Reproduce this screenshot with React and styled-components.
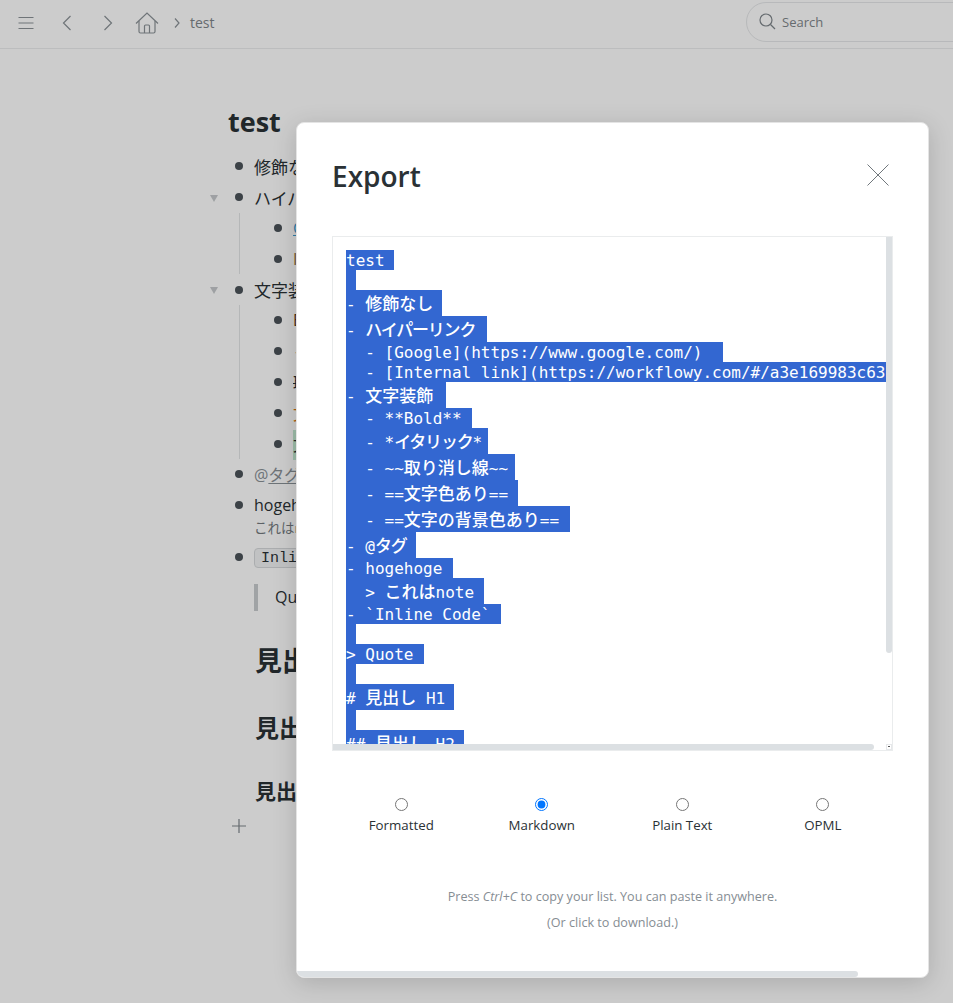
import React from "react";
import styled, { createGlobalStyle } from "styled-components";

const sans = `"Open Sans", "Noto Sans CJK JP", sans-serif`;
const mono = `"DejaVu Sans Mono", "Noto Sans CJK JP", monospace`;

const GlobalStyle = createGlobalStyle`
  html, body { margin: 0; height: 100%; overflow: hidden; background: #fff; }
  body { font-family: ${sans}; color: #2a3135; }
`;

const Page = styled.div`
  position: relative;
  height: 1003px;
  overflow: hidden;
`;

const TopBar = styled.header`
  display: flex;
  align-items: center;
  box-sizing: content-box;
  height: 45px;
  padding: 0 0 3px 18px;
  border-bottom: 1px solid #ecedee;
  color: #8b9297;
`;

const NavIcon = styled.svg`
  display: block;
  flex: none;
  margin-left: ${(p) => p.$left || 0}px;
  fill: none;
  stroke: currentColor;
  stroke-width: 1.2;
`;

const Crumb = styled.span`
  margin: -1px 0 0 10px;
  font-size: 14px;
  color: #7f868b;
`;

const SearchBox = styled.div`
  display: flex;
  align-items: center;
  gap: 6px;
  width: 300px;
  height: 38px;
  margin-left: auto;
  margin-right: -107px;
  margin-top: -2px;
  padding-left: 12px;
  box-sizing: content-box;
  border: 1px solid #e6e8ea;
  border-radius: 20px;
  font-size: 13px;
  color: #7f868b;
`;

const Content = styled.main`
  width: 95px;
  overflow: hidden;
  padding: 54px 0 0 205px;
`;

const Title = styled.h1`
  margin: 0 0 10px 23px;
  font-size: 27px;
  line-height: 38px;
  font-weight: 700;
  color: #2a3135;
`;

const Row = styled.div`
  display: flex;
  align-items: center;
  height: 30.8px;
  font-size: 16px;
  white-space: nowrap;
`;

const Jp = styled.span`
  font-size: 17px;
`;

const Toggle = styled.span`
  flex: none;
  box-sizing: border-box;
  width: 16px;
  padding-left: 2px;
  display: flex;
  justify-content: center;
  &::before {
    content: "";
    display: ${(p) => (p.$open ? "block" : "none")};
    border-left: 4px solid transparent;
    border-right: 4px solid transparent;
    border-top: 7px solid #c6c9cc;
    margin-top: 2px;
  }
`;

const Dot = styled.span`
  flex: none;
  width: 8px;
  height: 8px;
  margin: 0 11px 0 14px;
  border-radius: 50%;
  background: #4b5359;
`;

const Children = styled.div`
  margin-left: 34px;
  padding-left: 4px;
  border-left: 1px solid #e3e5e7;
`;

const Tag = styled.span`
  color: #8a9197;
  & u { text-underline-offset: 2px; }
`;

const Link = styled.span`
  color: #3d9bd0;
  text-decoration: underline;
`;

const Tinted = styled.span`
  color: ${(p) => p.$color || "inherit"};
  background: ${(p) => p.$bg || "none"};
  padding: ${(p) => (p.$bg ? "4px 0" : "0")};
`;

const Note = styled.div`
  margin-left: 49px;
  height: 21px;
  font-size: 13.5px;
  line-height: 15px;
  color: #737a80;
  white-space: nowrap;
`;

const InlineCode = styled.code`
  display: inline-block;
  padding: 0 6px;
  height: 20px;
  line-height: 19px;
  box-sizing: border-box;
  border: 1px solid #d6d9db;
  border-radius: 4px;
  background: #f2f3f4;
  font-family: "Liberation Mono", monospace;
  font-size: 15px;
`;

const Quote = styled.blockquote`
  margin: 12px 0 0 49px;
  height: 27px;
  padding-left: 17px;
  border-left: 4px solid #c9cccf;
  font-size: 16px;
  line-height: 27px;
`;

const Heading = styled.div`
  margin: ${(p) => p.$top}px 0 0 50px;
  font-size: ${(p) => p.$size}px;
  line-height: ${(p) => p.$line}px;
  font-weight: 700;
  white-space: nowrap;
`;

const AddButton = styled.div`
  display: flex;
  color: #7f868b;
  margin: 12px 0 0 27px;
`;

const Overlay = styled.div`
  position: absolute;
  inset: 0;
  background: rgba(0, 0, 0, 0.2);
`;

const Modal = styled.section`
  position: absolute;
  left: 296px;
  top: 122px;
  width: 633px;
  height: 856px;
  box-sizing: border-box;
  display: flex;
  flex-direction: column;
  padding: 0 35px;
  overflow: hidden;
  background: #fff;
  border: 1px solid #e4e4e4;
  border-radius: 8px;
  box-shadow: 0 5px 24px rgba(0, 0, 0, 0.16);
`;

const ModalHead = styled.div`
  display: flex;
  align-items: center;
  justify-content: space-between;
  height: 113px;
`;

const ModalTitle = styled.h2`
  margin: 0 0 7px;
  font-size: 28px;
  font-weight: 600;
  line-height: 40px;
  color: #2a3135;
`;

const CloseIcon = styled.svg`
  display: block;
  margin: 0 4px 9px 0;
  stroke: #70777c;
  stroke-width: 1;
  fill: none;
`;

const ExportBox = styled.div`
  position: relative;
  flex: none;
  width: 561px;
  height: 515px;
  box-sizing: border-box;
  padding: 13px 0 0 13px;
  overflow: hidden;
  border: 1px solid #eaeced;
`;

const SelectedLine = styled.div`
  width: ${(p) => p.$w}px;
  max-width: 540px;
  height: ${(p) => (p.$tall ? 26 : 20)}px;
  line-height: ${(p) => (p.$tall ? 28 : 22)}px;
  overflow: hidden;
  background: #3367d1;
  color: #fff;
  font-family: ${mono};
  font-size: 16px;
  white-space: pre;
`;

const Wide = styled.span`
  font-size: 17px;
  font-weight: 500;
  letter-spacing: ${(p) => (p.$kana ? "-1.2px" : "0")};
`;

const VScroll = styled.div`
  position: absolute;
  right: 0;
  top: 0;
  width: 6px;
  height: 416px;
  border-radius: 0 0 3px 3px;
  background: #dce0e3;
`;

const HScroll = styled.div`
  position: absolute;
  left: 0;
  bottom: 0;
  width: 541px;
  height: 6px;
  border-radius: 0 3px 3px 0;
  background: #dce0e3;
`;

const Resizer = styled.div`
  position: absolute;
  right: 0;
  bottom: 0;
  width: 6px;
  height: 6px;
  box-sizing: border-box;
  border: 1px solid #e6e8ea;
  background: #fff;
  &::after {
    content: "";
    display: block;
    width: 2px;
    height: 1px;
    margin: 1px 0 0 1px;
    background: #555;
  }
`;

const Formats = styled.div`
  display: grid;
  grid-template-columns: repeat(4, 1fr);
  width: 562px;
  margin-top: 47px;
  margin-left: -1px;
`;

const Format = styled.label`
  display: flex;
  flex-direction: column;
  align-items: center;
  gap: 5px;
  font-size: 13.3px;
  line-height: 18px;
  color: #2a3135;
`;

const Radio = styled.input`
  width: 13px;
  height: 13px;
  margin: 0;
`;

const Hint = styled.p`
  margin: ${(p) => p.$top}px 0 0;
  font-size: 12.6px;
  line-height: 18px;
  text-align: center;
  color: #868d93;
`;

const PageScroll = styled.div`
  position: absolute;
  left: 0;
  bottom: 0;
  width: 561px;
  height: 6px;
  border-radius: 0 3px 3px 0;
  background: #dce0e3;
`;

const exportLines = [
  { w: 48, text: "test " },
  { w: 10, text: " " },
  { w: 96, tall: true, text: "- 修飾なし" },
  { w: 141, tall: true, text: "- ハイパーリンク" },
  { w: 377, text: "  - [Google](https://www.google.com/) " },
  { w: 540, text: "  - [Internal link](https://workflowy.com/#/a3e169983c63" },
  { w: 100, tall: true, text: "- 文字装飾" },
  { w: 126, text: "  - **Bold**" },
  { w: 142, tall: true, text: "  - *イタリック*" },
  { w: 169, tall: true, text: "  - ~~取り消し線~~" },
  { w: 172, tall: true, text: "  - ==文字色あり==" },
  { w: 224, tall: true, text: "  - ==文字の背景色あり==" },
  { w: 70, tall: true, text: "- @タグ" },
  { w: 107, text: "- hogehoge" },
  { w: 138, tall: true, text: "  > これはnote" },
  { w: 155, text: "- `Inline Code`" },
  { w: 10, text: " " },
  { w: 78, text: "> Quote " },
  { w: 10, text: " " },
  { w: 108, tall: true, text: "# 見出し H1" },
  { w: 10, text: " " },
  { w: 118, tall: true, text: "## 見出し H2" },
];

const formats = ["Formatted", "Markdown", "Plain Text", "OPML"];

// the japanese runs render bigger than the mono text around them
function splitWide(text) {
  return text.split(/([\u3040-\u30ff\u4e00-\u9fff]+)/).map((part, i) =>
    i % 2 ? (
      <Wide key={i} $kana={/^[\u30a0-\u30ff]+$/.test(part)}>{part}</Wide>
    ) : (
      part
    ),
  );
}

function Item({ open, children }) {
  return (
    <Row>
      <Toggle $open={open} />
      <Dot />
      <span>{children}</span>
    </Row>
  );
}

export default function App() {
  return (
    <Page>
      <GlobalStyle />
      <TopBar>
        <NavIcon width="16" height="14" viewBox="0 0 16 14">
          <path d="M0.5 1.5h15M0.5 7h15M0.5 12.5h15" />
        </NavIcon>
        <NavIcon $left={28} width="10" height="16" viewBox="0 0 10 16">
          <path d="M8.5 1L1.5 8l7 7" />
        </NavIcon>
        <NavIcon $left={31} width="10" height="16" viewBox="0 0 10 16">
          <path d="M1.5 1l7 7-7 7" />
        </NavIcon>
        <NavIcon $left={22} width="24" height="22" viewBox="0 0 24 22">
          <path d="M1 11.5L12 1l11 10.5" />
          <path d="M4 9v10.5a1.5 1.5 0 0 0 1.5 1.5h13a1.5 1.5 0 0 0 1.5-1.5V9" />
          <path d="M9.5 21v-7a1 1 0 0 1 1-1h3a1 1 0 0 1 1 1v7" />
        </NavIcon>
        <NavIcon $left={15} width="6" height="10" viewBox="0 0 6 10">
          <path d="M1 0.5L5 5 1 9.5" />
        </NavIcon>
        <Crumb>test</Crumb>
        <SearchBox>
          <NavIcon width="17" height="17" viewBox="0 0 17 17">
            <circle cx="7" cy="7" r="6" />
            <path d="M11.5 11.5L16 16" />
          </NavIcon>
          Search
        </SearchBox>
      </TopBar>

      <Content>
        <Title>test</Title>
        <Item><Jp>修飾なし</Jp></Item>
        <Item open><Jp>ハイパーリンク</Jp></Item>
        <Children>
          <Item><Link>Google</Link></Item>
          <Item><Tinted $color="#8a6d3b">Internal link</Tinted></Item>
        </Children>
        <Item open><Jp>文字装飾</Jp></Item>
        <Children>
          <Item><Tinted $color="#5b3a1e">Bold</Tinted></Item>
          <Item><em>イタリック</em></Item>
          <Item><s>取り消し線</s></Item>
          <Item><Tinted $color="#d9730d">文字色あり</Tinted></Item>
          <Item><Tinted $bg="#c4ecd2">文字の背景色あり</Tinted></Item>
        </Children>
        <Item><Tag>@<u>タグ</u></Tag></Item>
        <Item>hogehoge</Item>
        <Note>これはnote</Note>
        <Item><InlineCode>Inline Code</InlineCode></Item>
        <Quote>Quote</Quote>
        <Heading $top={30} $size={27} $line={40}>見出し H1</Heading>
        <Heading $top={29} $size={24} $line={36}>見出し H2</Heading>
        <Heading $top={29} $size={21} $line={32}>見出し H3</Heading>
        <AddButton>
          <NavIcon width="14" height="14" viewBox="0 0 14 14">
            <path d="M7 0v14M0 7h14" />
          </NavIcon>
        </AddButton>
      </Content>

      <Overlay />

      <Modal>
        <ModalHead>
          <ModalTitle>Export</ModalTitle>
          <CloseIcon width="22" height="22" viewBox="0 0 22 22">
            <path d="M0.5 0.5l21 21M21.5 0.5l-21 21" />
          </CloseIcon>
        </ModalHead>
        <ExportBox>
          {exportLines.map((line, i) => (
            <SelectedLine key={i} $w={line.w} $tall={line.tall}>
              {splitWide(line.text)}
            </SelectedLine>
          ))}
          <VScroll />
          <HScroll />
          <Resizer />
        </ExportBox>
        <Formats>
          {formats.map((name) => (
            <Format key={name}>
              <Radio type="radio" name="format" defaultChecked={name === "Markdown"} />
              {name}
            </Format>
          ))}
        </Formats>
        <Hint $top={54}>Press <em>Ctrl+C</em> to copy your list. You can paste it anywhere.</Hint>
        <Hint $top={8}>(Or click to download.)</Hint>
        <PageScroll />
      </Modal>
    </Page>
  );
}
